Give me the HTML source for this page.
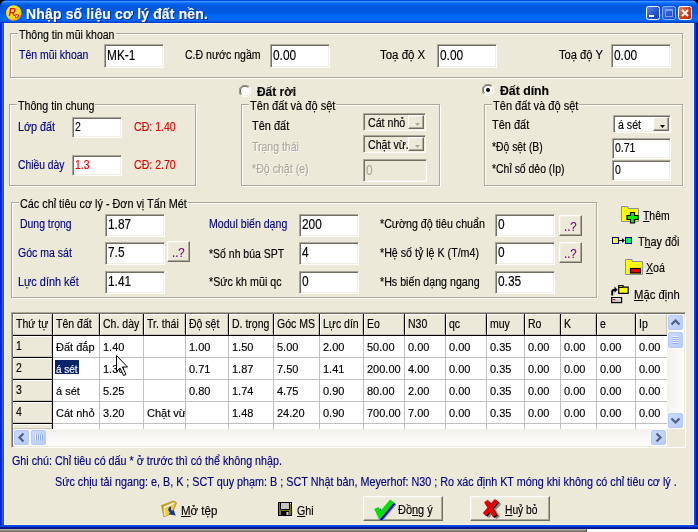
<!DOCTYPE html>
<html lang="vi">
<head>
<meta charset="utf-8">
<title>Nhập số liệu cơ lý đất nền.</title>
<style>
*{box-sizing:border-box;margin:0;padding:0}
html,body{width:698px;height:532px;overflow:hidden;background:#fff}
body{font-family:"Liberation Sans",sans-serif;font-size:12px;color:#000;position:relative;-webkit-text-stroke:.15px}
#root{position:absolute;left:0;top:0;width:698px;height:532px;will-change:transform}
.a{position:absolute;white-space:nowrap}
#win{left:0;top:0;width:698px;height:529px;background:#0831d9;border-radius:7px 7px 0 0}
#title{left:0;top:0;width:698px;height:23px;background:linear-gradient(#0048e0 0,#0050e8 3%,#3a90ff 6%,#3a90ff 8%,#0a6cf8 13%,#0068f8 17%,#0058e0 24%,#0058e0 56%,#0068f8 66%,#0068f8 90%,#0044d4 96%,#0038c8 100%);border-radius:7px 7px 0 0}
#ttext{left:26px;top:7px;color:#fff;font-weight:bold;font-size:14px;line-height:14px;letter-spacing:.15px;text-shadow:1px 1px #0a2a8a}
#client{left:4px;top:23px;width:690px;height:502px;background:#ece9d8;box-shadow:inset 0 0 0 1px #fbf4de}
.nv{color:#000080}
.rd{color:#e00000}
.gy{color:#aca899;text-shadow:1px 1px 0 #fff}
.gb{border:1px solid #aca899;box-shadow:inset 1px 1px 0 #fff, 1px 1px 0 #fff}
.lg{background:#ece9d8;line-height:14px}
.lg span,.t{display:inline-block;line-height:14px;transform:scaleX(.885);transform-origin:0 0}
.b{font-weight:bold;transform:none}
.in{background:#fff;border:1px solid;border-color:#aca899 #fff #fff #aca899;box-shadow:inset 1px 1px 0 #716f64, inset -1px -1px 0 #f1efe2;font-size:14px;line-height:16px;padding:2px 0 0 2px}
.in span{display:inline-block;transform:scaleX(.85);transform-origin:0 0}
.in.sm{font-size:12px;line-height:14px;padding:2px 0 0 2px}
.in.sm span{transform:scaleX(.876)}
.in.md{padding-top:1px}
.in.dis{background:#ece9d8;color:#aca899}
.btn{background:#ece9d8;border:1px solid;border-color:#fff #716f64 #716f64 #fff;box-shadow:inset -1px -1px 0 #aca899, inset 1px 1px 0 #f1efe2}
u{text-decoration:underline}
.hd{background:#ece9d8;border:1px solid;border-color:#fff #cbc7b8 #cbc7b8 #fff;overflow:hidden}
.hd span{position:absolute;left:2px;top:2px;line-height:14px;transform:scaleX(.876);transform-origin:0 0}
.gc{background:#fff;border:0 solid #c0c0c0;overflow:hidden;font-size:11px}
.gc span{position:absolute;left:3px;top:4px;line-height:14px}
</style>
</head>
<body>
<div id="root">
<div class="a" style="left:0;top:529px;width:587px;height:3px;background:linear-gradient(#cfcbbb,#8d8b7e 50%,#66645b);border-right:1px solid #5a5850"></div>
<div class="a" style="left:0;top:0;width:698px;height:10px;background:#000"></div>
<div id="win" class="a"></div>
<div class="a" style="left:0;top:20px;width:4px;height:509px;background:linear-gradient(90deg,#0019cf 0 25%,#0831d9 25% 50%,#166aee 50% 75%,#0855dd 75%)"></div>
<div class="a" style="left:694px;top:20px;width:4px;height:509px;background:linear-gradient(90deg,#0a4aee 0 25%,#0040d8 25% 50%,#001c9c 50% 75%,#00138c 75%)"></div>
<div class="a" style="left:0;top:525px;width:698px;height:4px;background:linear-gradient(#0a4aee 0 25%,#0040d8 25% 50%,#001c9c 50% 75%,#00138c 75%)"></div>
<div id="title" class="a"></div>
<div id="ttext" class="a">Nhập số liệu cơ lý đất nền.</div>
<div id="client" class="a"></div>
<div class="a gb" style="left:10px;top:33px;width:673px;height:45px"></div>
<div class="a lg" style="left:18px;top:28px;width:98px;padding-left:1px"><span style="transform:scaleX(0.878)">Thông tin mũi khoan</span></div>
<div class="a t nv" style="left:19px;top:48px;transform:scaleX(0.874)">Tên mũi khoan</div>
<div class="a in " style="left:104px;top:44px;width:60px;height:24px"><span>MK-1</span></div>
<div class="a t " style="left:185px;top:48px;transform:scaleX(0.879)">C.Đ nước ngầm</div>
<div class="a in " style="left:270px;top:44px;width:60px;height:24px"><span>0.00</span></div>
<div class="a t " style="left:380px;top:48px;transform:scaleX(0.954)">Toạ độ X</div>
<div class="a in " style="left:437px;top:44px;width:60px;height:24px"><span>0.00</span></div>
<div class="a t " style="left:559px;top:48px;transform:scaleX(0.931)">Toạ độ Y</div>
<div class="a in " style="left:611px;top:44px;width:60px;height:24px"><span>0.00</span></div>
<div class="a gb" style="left:9px;top:104px;width:187px;height:82px"></div>
<div class="a lg" style="left:17px;top:99px;width:78px;padding-left:1px"><span style="transform:scaleX(0.888)">Thông tin chung</span></div>
<div class="a t nv" style="left:18px;top:120px;transform:scaleX(0.900)">Lớp đất</div>
<div class="a in sm" style="left:72px;top:117px;width:50px;height:21px"><span>2</span></div>
<div class="a t rd" style="left:134px;top:120px;transform:scaleX(0.881)">CĐ: 1.40</div>
<div class="a t nv" style="left:18px;top:158px;transform:scaleX(0.859)">Chiều dày</div>
<div class="a in sm" style="left:72px;top:155px;width:50px;height:21px;color:#f00000"><span>1.3</span></div>
<div class="a t rd" style="left:134px;top:158px;transform:scaleX(0.881)">CĐ: 2.70</div>
<div class="a t b" style="left:257px;top:85px;transform:scaleX(0.994)">Đất rời</div>
<div class="a gb" style="left:241px;top:104px;width:199px;height:82px"></div>
<div class="a lg" style="left:249px;top:99px;width:87px;padding-left:1px"><span style="transform:scaleX(0.921)">Tên đất và độ sệt</span></div>
<div class="a t " style="left:252px;top:119px;transform:scaleX(0.914)">Tên đất</div>
<div class="a t gy" style="left:252px;top:140px;transform:scaleX(0.873)">Trạng thái</div>
<div class="a t gy" style="left:252px;top:162px;transform:scaleX(0.884)">*Độ chặt (e)</div>
<div class="a in dis" style="left:363px;top:159px;width:64px;height:23px"><span>0</span></div>
<div class="a t b" style="left:500px;top:84px;transform:scaleX(1.021)">Đất dính</div>
<div class="a gb" style="left:484px;top:104px;width:199px;height:82px"></div>
<div class="a lg" style="left:492px;top:99px;width:87px;padding-left:1px"><span style="transform:scaleX(0.921)">Tên đất và độ sệt</span></div>
<div class="a t " style="left:492px;top:118px;transform:scaleX(0.914)">Tên đất</div>
<div class="a t " style="left:492px;top:140px;transform:scaleX(0.864)">*Độ sệt (B)</div>
<div class="a t " style="left:492px;top:162px;transform:scaleX(0.870)">*Chỉ số dẻo (Ip)</div>
<div class="a in sm" style="left:612px;top:138px;width:59px;height:21px"><span>0.71</span></div>
<div class="a in sm" style="left:612px;top:160px;width:59px;height:21px"><span>0</span></div>
<div class="a gb" style="left:11px;top:202px;width:586px;height:96px"></div>
<div class="a lg" style="left:19px;top:197px;width:169px;padding-left:1px"><span style="transform:scaleX(0.902)">Các chỉ tiêu cơ lý - Đơn vị Tấn Mét</span></div>
<div class="a t nv" style="left:20px;top:217px;transform:scaleX(0.869)">Dung trọng</div>
<div class="a t nv" style="left:18px;top:246px;transform:scaleX(0.878)">Góc ma sát</div>
<div class="a t nv" style="left:18px;top:275px;transform:scaleX(0.909)">Lực dính kết</div>
<div class="a in md" style="left:105px;top:214px;width:60px;height:23px"><span>1.87</span></div>
<div class="a in md" style="left:105px;top:242px;width:60px;height:23px"><span>7.5</span></div>
<div class="a in md" style="left:105px;top:271px;width:60px;height:23px"><span>1.41</span></div>
<div class="a t nv" style="left:209px;top:217px;transform:scaleX(0.882)">Modul biến dạng</div>
<div class="a t " style="left:209px;top:247px;transform:scaleX(0.873)">*Số nh búa SPT</div>
<div class="a t " style="left:209px;top:275px;transform:scaleX(0.891)">*Sức kh mũi qc</div>
<div class="a in md" style="left:299px;top:214px;width:60px;height:23px"><span>200</span></div>
<div class="a in md" style="left:299px;top:242px;width:60px;height:23px"><span>4</span></div>
<div class="a in md" style="left:299px;top:271px;width:60px;height:23px"><span>0</span></div>
<div class="a t " style="left:380px;top:217px;transform:scaleX(0.889)">*Cường độ tiêu chuẩn</div>
<div class="a t " style="left:380px;top:246px;transform:scaleX(0.889)">*Hệ số tỷ lệ K (T/m4)</div>
<div class="a t " style="left:380px;top:275px;transform:scaleX(0.889)">*Hs biến dạng ngang</div>
<div class="a in md" style="left:495px;top:214px;width:60px;height:23px"><span>0</span></div>
<div class="a in md" style="left:495px;top:242px;width:60px;height:23px"><span>0</span></div>
<div class="a in md" style="left:495px;top:271px;width:60px;height:23px"><span>0.35</span></div>
<svg class="a" style="left:239px;top:85px" width="12" height="12" viewBox="0 0 12 12"><circle cx="6" cy="6" r="5.5" fill="#fff"/><path d="M1.8 10.2A5.9 5.9 0 0 1 10.2 1.8" fill="none" stroke="#8e8b7c" stroke-width="1"/><path d="M2.6 9.4A4.8 4.8 0 0 1 9.4 2.6" fill="none" stroke="#55534a" stroke-width="1"/><path d="M10.2 1.8A5.9 5.9 0 0 1 1.8 10.2" fill="none" stroke="#fff" stroke-width="1"/><path d="M9.4 2.6A4.8 4.8 0 0 1 2.6 9.4" fill="none" stroke="#f1efe2" stroke-width="1"/></svg>
<svg class="a" style="left:482px;top:84px" width="12" height="12" viewBox="0 0 12 12"><circle cx="6" cy="6" r="5.5" fill="#fff"/><path d="M1.8 10.2A5.9 5.9 0 0 1 10.2 1.8" fill="none" stroke="#8e8b7c" stroke-width="1"/><path d="M2.6 9.4A4.8 4.8 0 0 1 9.4 2.6" fill="none" stroke="#55534a" stroke-width="1"/><path d="M10.2 1.8A5.9 5.9 0 0 1 1.8 10.2" fill="none" stroke="#fff" stroke-width="1"/><path d="M9.4 2.6A4.8 4.8 0 0 1 2.6 9.4" fill="none" stroke="#f1efe2" stroke-width="1"/><circle cx="6" cy="6" r="2" fill="#000"/></svg>
<div class="a in" style="left:363px;top:113px;width:63px;height:18px;background:#ece9d8;padding:0"></div>
<div class="a t" style="left:368px;top:116px;width:46px;overflow:hidden">Cát nhỏ</div>
<div class="a btn" style="left:408px;top:115px;width:16px;height:14px"></div>
<svg class="a" style="left:415px;top:123px" width="5" height="3" viewBox="0 0 5 3"><path d="M0 0h5L2.500 3z" fill="#aca899"/></svg>
<div class="a in" style="left:363px;top:135px;width:63px;height:18px;background:#ece9d8;padding:0"></div>
<div class="a t" style="left:368px;top:138px;width:46px;overflow:hidden">Chặt vừ.</div>
<div class="a btn" style="left:408px;top:137px;width:16px;height:14px"></div>
<svg class="a" style="left:415px;top:145px" width="5" height="3" viewBox="0 0 5 3"><path d="M0 0h5L2.500 3z" fill="#aca899"/></svg>
<div class="a in" style="left:613px;top:115px;width:58px;height:18px;background:#fff;padding:0"></div>
<div class="a t" style="left:618px;top:118px;width:40px;overflow:hidden">á sét</div>
<div class="a btn" style="left:653px;top:117px;width:16px;height:14px"></div>
<svg class="a" style="left:660px;top:125px" width="5" height="3" viewBox="0 0 5 3"><path d="M0 0h5L2.500 3z" fill="#000"/></svg>
<div class="a btn" style="left:167px;top:241px;width:23px;height:21px"></div>
<div class="a" style="left:172px;top:246px;color:#800080;font-size:12px;line-height:14px;transform:scaleX(.95);transform-origin:0 0">..?</div>
<div class="a btn" style="left:559px;top:215px;width:23px;height:21px"></div>
<div class="a" style="left:564px;top:220px;color:#800080;font-size:12px;line-height:14px;transform:scaleX(.95);transform-origin:0 0">..?</div>
<div class="a btn" style="left:559px;top:242px;width:23px;height:21px"></div>
<div class="a" style="left:564px;top:247px;color:#800080;font-size:12px;line-height:14px;transform:scaleX(.95);transform-origin:0 0">..?</div>
<svg class="a" style="left:621px;top:206px" width="19" height="18" viewBox="0 0 19 18"><path d="M.5 15.500V.500h6.500v2h10.500v13z" fill="#ffff00" stroke="#8c8ca4" stroke-width="1"/><path d="M2 1.500h4" stroke="#fff" stroke-width="1" stroke-dasharray="1 1"/><path d="M9.500 6.500h4v3h3.500v4h-3.500v3.500h-4v-3.500h-3.500v-4h3.500z" fill="#00f000" stroke="#000" stroke-width="1.200"/></svg>
<div class="a t " style="left:643px;top:209px;transform:scaleX(0.867)"><u>T</u>hêm</div>
<svg class="a" style="left:612px;top:237px" width="20" height="7" viewBox="0 0 20 7"><rect x=".5" y=".5" width="6" height="6" fill="#ffff00" stroke="#000080" stroke-width="1"/><rect x="13.500" y=".5" width="6" height="6" fill="#00e878" stroke="#000080" stroke-width="1"/><path d="M7 3.500h5" stroke="#000" stroke-width="1"/><path d="M10 1l2.800 2.500L10 6z" fill="#000"/></svg>
<div class="a t " style="left:638px;top:235px;transform:scaleX(0.899)">T<u>h</u>ay đổi</div>
<svg class="a" style="left:625px;top:259px" width="19" height="18" viewBox="0 0 19 18"><path d="M.5 15.500V.500h6.500v2h10.500v13z" fill="#ffff00" stroke="#8c8ca4" stroke-width="1"/><path d="M2 1.500h4" stroke="#fff" stroke-width="1" stroke-dasharray="1 1"/><path d="M.5 15V.500" stroke="none"/><rect x="5.500" y="9.500" width="10" height="4.500" fill="#f00000" stroke="#000" stroke-width="1.200"/></svg>
<div class="a t " style="left:646px;top:261px"><u>X</u>oá</div>
<svg class="a" style="left:610px;top:285px" width="20" height="19" viewBox="0 0 20 19"><path d="M8.700 8.300V.700h4.300v1.500h5.200v6.100z" fill="#ffff00" stroke="#000" stroke-width="1.200"/><path d="M8.700 2.500h4.300" stroke="#000" stroke-width="1"/><path d="M2.200 10.500V7q0-2.300 3-2.300" fill="none" stroke="#000" stroke-width="2"/><path d="M4.500 1.500L7.600 4.700 4.500 7.800z" fill="#000"/><rect x="1.600" y="12.600" width="10" height="5" fill="#c8c8c8" stroke="#000" stroke-width="1.200"/><path d="M2.500 13.700h8" stroke="#fff" stroke-width="1"/><rect x="3" y="14" width="2.200" height="1.200" fill="#f00000"/></svg>
<div class="a t " style="left:634px;top:288px;transform:scaleX(0.938)"><u>M</u>ặc định</div>
<div class="a t nv" style="left:12px;top:454px;transform:scaleX(0.894)">Ghi chú: Chỉ tiêu có dấu * ở trước thì có thể không nhập.</div>
<div class="a t nv" style="left:55px;top:475px;transform:scaleX(0.899)">Sức chịu tải ngang: e, B, K ; SCT quy phạm: B ; SCT Nhật bản, Meyerhof: N30 ; Ro xác định KT móng khi không có chỉ tiêu cơ lý .</div>
<svg class="a" style="left:160px;top:500px" width="19" height="18" viewBox="0 0 19 18"><path d="M1.500 5.500L13.500 1l3 1.800-4.500 10.500-8 3.500z" fill="#d9a520" stroke="#b88a18" stroke-width=".8"/><path d="M3.500 7L14 2.200l.8 1.500L5 9.500z" fill="#f4f8ff"/><path d="M4 8.500L15 3.500 12 13l-7.500 3.300z" fill="#f3cb3c"/><path d="M4 8.500L5 16" stroke="#fff" stroke-width="1" opacity=".8"/><path d="M10 6.500q-3.500 3 0 6.200l-1.300 1.500 7 1.300-2.200-6-1.300 1.400q-2.300-2-.7-3.900z" fill="#123a8c"/></svg>
<div class="a t " style="left:181px;top:504px;transform:scaleX(0.958)"><u>M</u>ở tệp</div>
<svg class="a" style="left:278px;top:502px" width="14" height="14" viewBox="0 0 14 14"><rect x=".5" y=".5" width="13" height="13" fill="#808000" stroke="#000" stroke-width="1"/><rect x="3" y="1" width="8" height="6" fill="#c4c4c8"/><path d="M2.500 1v6.500h9V1" fill="none" stroke="#000" stroke-width="1"/><rect x="3" y="9" width="8" height="4.500" fill="#000"/><rect x="8.500" y="10" width="2" height="3" fill="#d8d8d8"/><rect x="12" y="1" width="1" height="1" fill="#fff"/></svg>
<div class="a t " style="left:297px;top:504px"><u>G</u>hi</div>
<div class="a btn" style="left:363px;top:496px;width:80px;height:25px"></div>
<svg class="a" style="left:373px;top:498px" width="23" height="22" viewBox="0 0 23 22"><path d="M3.500 10L7 17.500 19 3" fill="none" stroke="#9a988c" stroke-width="5" transform="translate(2.500,2)"/><path d="M3.500 10L7 17.500 19 3" fill="none" stroke="#0000e0" stroke-width="5" transform="translate(1.500,1.500)"/><path d="M3.500 10L7 17.500 19 3" fill="none" stroke="#00e000" stroke-width="5"/></svg>
<div class="a t " style="left:398px;top:503px;transform:scaleX(0.912)">Đồ<u>n</u>g ý</div>
<div class="a btn" style="left:470px;top:496px;width:80px;height:25px"></div>
<svg class="a" style="left:481px;top:497px" width="23" height="24" viewBox="0 0 23 24"><g fill="none" stroke-width="4.500"><path d="M5 4l9 15M15.500 3.500L3.500 17.500" stroke="#8c8c8c" transform="translate(3,2)"/><path d="M5 4l9 15M15.500 3.500L3.500 17.500" stroke="#000" transform="translate(1,.8)"/><path d="M5 4l9 15M15.500 3.500L3.500 17.500" stroke="#e80000"/></g></svg>
<div class="a t " style="left:505px;top:503px;transform:scaleX(0.855)"><u>H</u>uỷ bỏ</div>
<div class="a" style="left:11px;top:312px;width:675px;height:136px;background:#fff;border:1px solid;border-color:#aca899 #fff #fff #aca899;box-shadow:inset 1px 1px 0 #716f64,inset -1px -1px 0 #ece9d8"></div>
<div class="a" style="left:13px;top:314px;width:654px;height:22px;background:#000"></div>
<div class="a hd" style="left:13px;top:314px;width:39px;height:21px"><span>Thứ tự</span></div>
<div class="a hd" style="left:53px;top:314px;width:46px;height:21px"><span>Tên đất</span></div>
<div class="a hd" style="left:100px;top:314px;width:43px;height:21px"><span>Ch. dày</span></div>
<div class="a hd" style="left:144px;top:314px;width:41px;height:21px"><span>Tr. thái</span></div>
<div class="a hd" style="left:186px;top:314px;width:42px;height:21px"><span>Độ sệt</span></div>
<div class="a hd" style="left:229px;top:314px;width:44px;height:21px"><span>D. trọng</span></div>
<div class="a hd" style="left:274px;top:314px;width:45px;height:21px"><span>Góc MS</span></div>
<div class="a hd" style="left:320px;top:314px;width:43px;height:21px"><span>Lực dín</span></div>
<div class="a hd" style="left:364px;top:314px;width:40px;height:21px"><span>Eo</span></div>
<div class="a hd" style="left:405px;top:314px;width:40px;height:21px"><span>N30</span></div>
<div class="a hd" style="left:446px;top:314px;width:40px;height:21px"><span>qc</span></div>
<div class="a hd" style="left:487px;top:314px;width:37px;height:21px"><span>muy</span></div>
<div class="a hd" style="left:525px;top:314px;width:35px;height:21px"><span>Ro</span></div>
<div class="a hd" style="left:561px;top:314px;width:35px;height:21px"><span>K</span></div>
<div class="a hd" style="left:597px;top:314px;width:38px;height:21px"><span>e</span></div>
<div class="a hd" style="left:636px;top:314px;width:31px;height:21px"><span>Ip</span></div>
<div class="a" style="left:13px;top:336px;width:40px;height:93px;background:#000"></div>
<div class="a hd" style="left:13px;top:336px;width:39px;height:21px"><span style="top:2px;left:2px">1</span></div>
<div class="a gc" style="left:53px;top:336px;width:47px;height:22px;border-width:0 1px 1px 0"><span>Đất đắp</span></div>
<div class="a gc" style="left:100px;top:336px;width:44px;height:22px;border-width:0 1px 1px 0"><span>1.40</span></div>
<div class="a gc" style="left:144px;top:336px;width:42px;height:22px;border-width:0 1px 1px 0"></div>
<div class="a gc" style="left:186px;top:336px;width:43px;height:22px;border-width:0 1px 1px 0"><span>1.00</span></div>
<div class="a gc" style="left:229px;top:336px;width:45px;height:22px;border-width:0 1px 1px 0"><span>1.50</span></div>
<div class="a gc" style="left:274px;top:336px;width:46px;height:22px;border-width:0 1px 1px 0"><span>5.00</span></div>
<div class="a gc" style="left:320px;top:336px;width:44px;height:22px;border-width:0 1px 1px 0"><span>2.00</span></div>
<div class="a gc" style="left:364px;top:336px;width:41px;height:22px;border-width:0 1px 1px 0"><span>50.00</span></div>
<div class="a gc" style="left:405px;top:336px;width:41px;height:22px;border-width:0 1px 1px 0"><span>0.00</span></div>
<div class="a gc" style="left:446px;top:336px;width:41px;height:22px;border-width:0 1px 1px 0"><span>0.00</span></div>
<div class="a gc" style="left:487px;top:336px;width:38px;height:22px;border-width:0 1px 1px 0"><span>0.35</span></div>
<div class="a gc" style="left:525px;top:336px;width:36px;height:22px;border-width:0 1px 1px 0"><span>0.00</span></div>
<div class="a gc" style="left:561px;top:336px;width:36px;height:22px;border-width:0 1px 1px 0"><span>0.00</span></div>
<div class="a gc" style="left:597px;top:336px;width:39px;height:22px;border-width:0 1px 1px 0"><span>0.00</span></div>
<div class="a gc" style="left:636px;top:336px;width:32px;height:22px;border-width:0 0 1px 0"><span>0.00</span></div>
<div class="a hd" style="left:13px;top:358px;width:39px;height:21px"><span style="top:2px;left:2px">2</span></div>
<div class="a gc" style="left:53px;top:358px;width:47px;height:22px;border-width:0 1px 1px 0"><span style="background:#0a246a;left:2px;top:2px;height:14px;width:24px"></span><span style="color:#fff;transform:scaleX(.9);transform-origin:0 0">á sét</span></div>
<div class="a gc" style="left:100px;top:358px;width:44px;height:22px;border-width:0 1px 1px 0"><span>1.30</span></div>
<div class="a gc" style="left:144px;top:358px;width:42px;height:22px;border-width:0 1px 1px 0"></div>
<div class="a gc" style="left:186px;top:358px;width:43px;height:22px;border-width:0 1px 1px 0"><span>0.71</span></div>
<div class="a gc" style="left:229px;top:358px;width:45px;height:22px;border-width:0 1px 1px 0"><span>1.87</span></div>
<div class="a gc" style="left:274px;top:358px;width:46px;height:22px;border-width:0 1px 1px 0"><span>7.50</span></div>
<div class="a gc" style="left:320px;top:358px;width:44px;height:22px;border-width:0 1px 1px 0"><span>1.41</span></div>
<div class="a gc" style="left:364px;top:358px;width:41px;height:22px;border-width:0 1px 1px 0"><span>200.00</span></div>
<div class="a gc" style="left:405px;top:358px;width:41px;height:22px;border-width:0 1px 1px 0"><span>4.00</span></div>
<div class="a gc" style="left:446px;top:358px;width:41px;height:22px;border-width:0 1px 1px 0"><span>0.00</span></div>
<div class="a gc" style="left:487px;top:358px;width:38px;height:22px;border-width:0 1px 1px 0"><span>0.35</span></div>
<div class="a gc" style="left:525px;top:358px;width:36px;height:22px;border-width:0 1px 1px 0"><span>0.00</span></div>
<div class="a gc" style="left:561px;top:358px;width:36px;height:22px;border-width:0 1px 1px 0"><span>0.00</span></div>
<div class="a gc" style="left:597px;top:358px;width:39px;height:22px;border-width:0 1px 1px 0"><span>0.00</span></div>
<div class="a gc" style="left:636px;top:358px;width:32px;height:22px;border-width:0 0 1px 0"><span>0.00</span></div>
<div class="a hd" style="left:13px;top:380px;width:39px;height:21px"><span style="top:2px;left:2px">3</span></div>
<div class="a gc" style="left:53px;top:380px;width:47px;height:22px;border-width:0 1px 1px 0"><span>á sét</span></div>
<div class="a gc" style="left:100px;top:380px;width:44px;height:22px;border-width:0 1px 1px 0"><span>5.25</span></div>
<div class="a gc" style="left:144px;top:380px;width:42px;height:22px;border-width:0 1px 1px 0"></div>
<div class="a gc" style="left:186px;top:380px;width:43px;height:22px;border-width:0 1px 1px 0"><span>0.80</span></div>
<div class="a gc" style="left:229px;top:380px;width:45px;height:22px;border-width:0 1px 1px 0"><span>1.74</span></div>
<div class="a gc" style="left:274px;top:380px;width:46px;height:22px;border-width:0 1px 1px 0"><span>4.75</span></div>
<div class="a gc" style="left:320px;top:380px;width:44px;height:22px;border-width:0 1px 1px 0"><span>0.90</span></div>
<div class="a gc" style="left:364px;top:380px;width:41px;height:22px;border-width:0 1px 1px 0"><span>80.00</span></div>
<div class="a gc" style="left:405px;top:380px;width:41px;height:22px;border-width:0 1px 1px 0"><span>2.00</span></div>
<div class="a gc" style="left:446px;top:380px;width:41px;height:22px;border-width:0 1px 1px 0"><span>0.00</span></div>
<div class="a gc" style="left:487px;top:380px;width:38px;height:22px;border-width:0 1px 1px 0"><span>0.35</span></div>
<div class="a gc" style="left:525px;top:380px;width:36px;height:22px;border-width:0 1px 1px 0"><span>0.00</span></div>
<div class="a gc" style="left:561px;top:380px;width:36px;height:22px;border-width:0 1px 1px 0"><span>0.00</span></div>
<div class="a gc" style="left:597px;top:380px;width:39px;height:22px;border-width:0 1px 1px 0"><span>0.00</span></div>
<div class="a gc" style="left:636px;top:380px;width:32px;height:22px;border-width:0 0 1px 0"><span>0.00</span></div>
<div class="a hd" style="left:13px;top:402px;width:39px;height:21px"><span style="top:2px;left:2px">4</span></div>
<div class="a gc" style="left:53px;top:402px;width:47px;height:22px;border-width:0 1px 1px 0"><span>Cát nhỏ</span></div>
<div class="a gc" style="left:100px;top:402px;width:44px;height:22px;border-width:0 1px 1px 0"><span>3.20</span></div>
<div class="a gc" style="left:144px;top:402px;width:42px;height:22px;border-width:0 1px 1px 0"><span>Chặt vừ</span></div>
<div class="a gc" style="left:186px;top:402px;width:43px;height:22px;border-width:0 1px 1px 0"></div>
<div class="a gc" style="left:229px;top:402px;width:45px;height:22px;border-width:0 1px 1px 0"><span>1.48</span></div>
<div class="a gc" style="left:274px;top:402px;width:46px;height:22px;border-width:0 1px 1px 0"><span>24.20</span></div>
<div class="a gc" style="left:320px;top:402px;width:44px;height:22px;border-width:0 1px 1px 0"><span>0.90</span></div>
<div class="a gc" style="left:364px;top:402px;width:41px;height:22px;border-width:0 1px 1px 0"><span>700.00</span></div>
<div class="a gc" style="left:405px;top:402px;width:41px;height:22px;border-width:0 1px 1px 0"><span>7.00</span></div>
<div class="a gc" style="left:446px;top:402px;width:41px;height:22px;border-width:0 1px 1px 0"><span>0.00</span></div>
<div class="a gc" style="left:487px;top:402px;width:38px;height:22px;border-width:0 1px 1px 0"><span>0.35</span></div>
<div class="a gc" style="left:525px;top:402px;width:36px;height:22px;border-width:0 1px 1px 0"><span>0.00</span></div>
<div class="a gc" style="left:561px;top:402px;width:36px;height:22px;border-width:0 1px 1px 0"><span>0.00</span></div>
<div class="a gc" style="left:597px;top:402px;width:39px;height:22px;border-width:0 1px 1px 0"><span>0.00</span></div>
<div class="a gc" style="left:636px;top:402px;width:32px;height:22px;border-width:0 0 1px 0"><span>0.00</span></div>
<div class="a hd" style="left:13px;top:424px;width:39px;height:5px"><span style="top:2px;left:2px"></span></div>
<div class="a gc" style="left:53px;top:424px;width:47px;height:6px;border-width:0 1px 0 0"></div>
<div class="a gc" style="left:100px;top:424px;width:44px;height:6px;border-width:0 1px 0 0"></div>
<div class="a gc" style="left:144px;top:424px;width:42px;height:6px;border-width:0 1px 0 0"></div>
<div class="a gc" style="left:186px;top:424px;width:43px;height:6px;border-width:0 1px 0 0"></div>
<div class="a gc" style="left:229px;top:424px;width:45px;height:6px;border-width:0 1px 0 0"></div>
<div class="a gc" style="left:274px;top:424px;width:46px;height:6px;border-width:0 1px 0 0"></div>
<div class="a gc" style="left:320px;top:424px;width:44px;height:6px;border-width:0 1px 0 0"></div>
<div class="a gc" style="left:364px;top:424px;width:41px;height:6px;border-width:0 1px 0 0"></div>
<div class="a gc" style="left:405px;top:424px;width:41px;height:6px;border-width:0 1px 0 0"></div>
<div class="a gc" style="left:446px;top:424px;width:41px;height:6px;border-width:0 1px 0 0"></div>
<div class="a gc" style="left:487px;top:424px;width:38px;height:6px;border-width:0 1px 0 0"></div>
<div class="a gc" style="left:525px;top:424px;width:36px;height:6px;border-width:0 1px 0 0"></div>
<div class="a gc" style="left:561px;top:424px;width:36px;height:6px;border-width:0 1px 0 0"></div>
<div class="a gc" style="left:597px;top:424px;width:39px;height:6px;border-width:0 1px 0 0"></div>
<div class="a gc" style="left:636px;top:424px;width:32px;height:6px;border-width:0"></div>
<svg width="0" height="0" style="position:absolute"><defs><linearGradient id="sbg" x1="0" y1="0" x2="1" y2="1"><stop offset="0" stop-color="#cbdafe"/><stop offset="1" stop-color="#b9cbf8"/></linearGradient></defs></svg>
<div class="a" style="left:667px;top:314px;width:17px;height:115px;background:linear-gradient(90deg,#f3f1ec,#fefefb)"></div>
<svg class="a" style="left:667px;top:314px" width="17" height="17" viewBox="0 0 17 17"><rect x=".5" y=".5" width="16" height="16" rx="2.500" fill="#fff"/><rect x="1.500" y="1.500" width="14" height="14" rx="1.500" fill="url(#sbg)" stroke="#b4c8f6" stroke-width="1"/><path d="M4.5 10.5L8.500 6.500l4 4" fill="none" stroke="#4d6185" stroke-width="2.200"/></svg>
<svg class="a" style="left:667px;top:412px" width="17" height="17" viewBox="0 0 17 17"><rect x=".5" y=".5" width="16" height="16" rx="2.500" fill="#fff"/><rect x="1.500" y="1.500" width="14" height="14" rx="1.500" fill="url(#sbg)" stroke="#b4c8f6" stroke-width="1"/><path d="M4.500 6.500l4 4 4-4" fill="none" stroke="#4d6185" stroke-width="2.200"/></svg>
<svg class="a" style="left:667px;top:331px" width="17" height="18" viewBox="0 0 17 18"><rect x=".5" y=".5" width="16" height="17" rx="2.500" fill="#fff"/><rect x="1.500" y="1.500" width="14" height="15" rx="1.500" fill="url(#sbg)" stroke="#b4c8f6" stroke-width="1"/><path d="M5.500 6.500h6M5.500 8.500h6M5.500 10.500h6M5.500 12.500h6" stroke="#8fa8ec" stroke-width="1"/><path d="M5.500 5.500h6M5.500 7.500h6M5.500 9.500h6M5.500 11.500h6" stroke="#eef3ff" stroke-width="1"/></svg>
<div class="a" style="left:13px;top:429px;width:654px;height:17px;background:linear-gradient(#f3f1ec,#fefefb)"></div>
<svg class="a" style="left:13px;top:429px" width="17" height="17" viewBox="0 0 17 17"><rect x=".5" y=".5" width="16" height="16" rx="2.500" fill="#fff"/><rect x="1.500" y="1.500" width="14" height="14" rx="1.500" fill="url(#sbg)" stroke="#b4c8f6" stroke-width="1"/><path d="M10.500 4.500l-4 4 4 4" fill="none" stroke="#4d6185" stroke-width="2.200"/></svg>
<svg class="a" style="left:650px;top:429px" width="17" height="17" viewBox="0 0 17 17"><rect x=".5" y=".5" width="16" height="16" rx="2.500" fill="#fff"/><rect x="1.500" y="1.500" width="14" height="14" rx="1.500" fill="url(#sbg)" stroke="#b4c8f6" stroke-width="1"/><path d="M6.500 4.500l4 4-4 4" fill="none" stroke="#4d6185" stroke-width="2.200"/></svg>
<svg class="a" style="left:30px;top:429px" width="17" height="17" viewBox="0 0 17 17"><rect x=".5" y=".5" width="16" height="16" rx="2.500" fill="#fff"/><rect x="1.500" y="1.500" width="14" height="14" rx="1.500" fill="url(#sbg)" stroke="#b4c8f6" stroke-width="1"/><path d="M6.500 5.500v6M8.500 5.500v6M10.500 5.500v6M12.500 5.500v6" stroke="#8fa8ec" stroke-width="1"/><path d="M5.500 5.500v6M7.500 5.500v6M9.500 5.500v6M11.500 5.500v6" stroke="#eef3ff" stroke-width="1"/></svg>
<div class="a" style="left:667px;top:429px;width:17px;height:17px;background:#ece9d8"></div>
<svg class="a" style="left:115px;top:354px" width="14" height="23" viewBox="0 0 14 23"><path d="M1.500 1.500v16l3.500-3.500 3.500 7.500 2.500-1-3.500-7.500H12.500z" fill="#fff" stroke="#000" stroke-width="1"/></svg>
<svg class="a" style="left:5px;top:4px" width="18" height="18" viewBox="0 0 18 18"><defs><radialGradient id="rg" cx=".4" cy=".35" r=".7"><stop offset="0" stop-color="#fff24a"/><stop offset=".7" stop-color="#ffd400"/><stop offset="1" stop-color="#f09000"/></radialGradient></defs><circle cx="8.800" cy="9" r="7.800" fill="url(#rg)"/><text x="3.500" y="12" font-family="Liberation Sans,sans-serif" font-size="10" font-weight="bold" font-style="italic" fill="#e01020">R</text><text x="9.800" y="14" font-family="Liberation Sans,sans-serif" font-size="6" font-weight="bold" font-style="italic" fill="#e01020">D</text></svg>
<svg class="a" style="left:646px;top:6px" width="14" height="14" viewBox="0 0 14 14"><defs><linearGradient id="gm" x1="0" y1="0" x2="1" y2="1"><stop offset="0" stop-color="#5a8cf0"/><stop offset=".5" stop-color="#2858d8"/><stop offset="1" stop-color="#1838b8"/></linearGradient></defs><rect x=".5" y=".5" width="13" height="13" rx="2" fill="url(#gm)" stroke="#fff" stroke-width="1"/><rect x="3" y="9" width="5" height="2" fill="#fff"/></svg>
<svg class="a" style="left:662px;top:6px" width="14" height="14" viewBox="0 0 14 14"><defs><linearGradient id="gx" x1="0" y1="0" x2="1" y2="1"><stop offset="0" stop-color="#4a7ce8"/><stop offset=".5" stop-color="#2a5cd8"/><stop offset="1" stop-color="#2050c8"/></linearGradient></defs><rect x=".5" y=".5" width="13" height="13" rx="2" fill="url(#gx)" stroke="#8fb0f0" stroke-width="1"/><rect x="3.500" y="3.500" width="7" height="7" fill="none" stroke="#7f9ee8" stroke-width="1"/><path d="M3.500 4h7" stroke="#7f9ee8" stroke-width="2"/></svg>
<svg class="a" style="left:678px;top:6px" width="14" height="14" viewBox="0 0 14 14"><defs><linearGradient id="gc" x1="0" y1="0" x2="1" y2="1"><stop offset="0" stop-color="#e8836a"/><stop offset=".5" stop-color="#d63f1c"/><stop offset="1" stop-color="#b32c0c"/></linearGradient></defs><rect x=".5" y=".5" width="13" height="13" rx="2" fill="url(#gc)" stroke="#fff" stroke-width="1"/><path d="M4 4l6 6M10 4l-6 6" stroke="#fff" stroke-width="2"/></svg>
</div>
</body>
</html>
